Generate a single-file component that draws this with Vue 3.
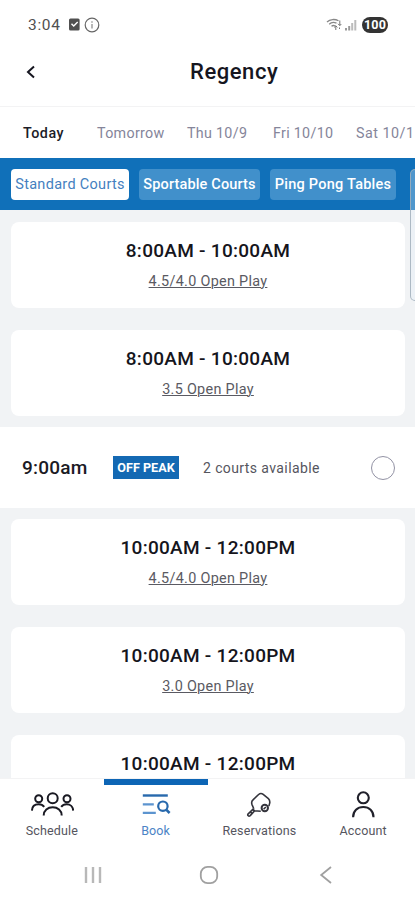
<script setup>
const days = [
  { label: 'Today', cls: 'today' },
  { label: 'Tomorrow', cls: 'tomorrow' },
  { label: 'Thu 10/9', cls: 'thu' },
  { label: 'Fri 10/10', cls: 'fri' },
  { label: 'Sat 10/1', cls: 'sat' },
]
const courts = ['Standard Courts', 'Sportable Courts', 'Ping Pong Tables']
const morning = [
  { time: '8:00AM - 10:00AM', title: '4.5/4.0 Open Play' },
  { time: '8:00AM - 10:00AM', title: '3.5 Open Play' },
]
const midday = [
  { time: '10:00AM - 12:00PM', title: '4.5/4.0 Open Play' },
  { time: '10:00AM - 12:00PM', title: '3.0 Open Play' },
  { time: '10:00AM - 12:00PM', title: '' },
]
</script>

<template>
  <div class="screen">
    <div class="status">
      <span class="clock">3:04</span>
      <svg class="check" width="11" height="13" viewBox="0 0 11 13">
        <rect x="0" y="0.5" width="10.6" height="12" rx="1.5" fill="#505050" />
        <path d="M2.5 5.8l2.2 2.3 4-4.2" fill="none" stroke="#fff" stroke-width="1.4" />
      </svg>
      <svg class="info" width="16" height="16" viewBox="0 0 16 16" fill="none" stroke="#666">
        <circle cx="8" cy="8" r="6.8" stroke-width="1.2" />
        <path d="M8 4.3v1.4M8 7v4.6" stroke-width="1.4" stroke="#999" />
      </svg>
      <svg class="wifi" width="16" height="13" viewBox="0 0 16 13" fill="none" stroke="#888" stroke-width="1.3">
        <path d="M1 4C4 1 9 .8 12.5 2.8M3.2 6.2C5.5 4 8 4 10.5 5.2M5.5 8.3c1.5-1.2 2.5-1 3.5-.3" />
        <path d="M13.8 2.5v5M12 5.8l1.8 1.8 1.5-1.6M9.8 12V7.8M8.2 9.4l1.6-1.6 1.6 1.6M13.5 9.5v1.5" stroke="#777" stroke-width="1" />
      </svg>
      <svg class="signal" width="12" height="12" viewBox="0 0 12 12">
        <path d="M0 9h2v2.6H0zM3.2 7h2v4.6h-2z" fill="#999" />
        <path d="M6.2 4h2v7.6h-2zM9.3 1h2v10.6h-2z" fill="#bbb" />
      </svg>
      <span class="battery">100</span>
    </div>

    <header class="header">
      <svg class="back" width="10" height="14" viewBox="0 0 10 14">
        <path d="M8 1.6L2 7l6 5.4" fill="none" stroke="#15151f" stroke-width="2" />
      </svg>
      <h1>Regency</h1>
    </header>

    <nav class="days">
      <span v-for="d in days" :key="d.label" class="day" :class="d.cls">{{ d.label }}</span>
    </nav>

    <div class="courts">
      <span v-for="(c, i) in courts" :key="c" class="court" :class="'court-' + i">{{ c }}</span>
    </div>

    <main class="list">
      <article v-for="(s, i) in morning" :key="'m' + i" class="card">
        <div class="time">{{ s.time }}</div>
        <div class="play">{{ s.title }}</div>
      </article>
      <section class="slot">
        <span class="slot-time">9:00am</span>
        <span class="badge">OFF PEAK</span>
        <span class="available">2 courts available</span>
        <span class="radio"></span>
      </section>
      <article v-for="(s, i) in midday" :key="'d' + i" class="card">
        <div class="time">{{ s.time }}</div>
        <div v-if="s.title" class="play">{{ s.title }}</div>
      </article>
    </main>

    <footer class="tabs">
      <div class="tab">
        <svg width="44" height="28" viewBox="0 0 44 28" fill="none" stroke="#191922" stroke-width="2">
          <circle cx="22.7" cy="7.3" r="5" />
          <path d="M13.7 24.4c0-5 4-8.2 9-8.2s9 3.2 9 8.2" />
          <circle cx="8.7" cy="7.8" r="3.5" />
          <circle cx="37" cy="7.8" r="3.5" />
          <path d="M1.9 19.6c.2-4 3-6.3 6.8-6.3 2.4 0 4.3.9 5.5 2.5M43.2 19.6c-.2-4-3-6.3-6.5-6.3-2.4 0-4.3.9-5.5 2.5" />
        </svg>
        <span class="lbl">Schedule</span>
      </div>
      <div class="tab active">
        <svg width="30" height="28" viewBox="0 0 30 28" fill="none" stroke="#2869ad">
          <path d="M1.8 4.5h25" stroke-width="2.4" />
          <path d="M1.8 13.3h11M1.8 21.8h13" stroke="#5c94cf" stroke-width="2.3" />
          <circle cx="21.9" cy="15.2" r="4.7" stroke-width="2.2" />
          <path d="M25.2 18.6l3.4 3.4" stroke-width="2.6" />
        </svg>
        <span class="lbl book">Book</span>
      </div>
      <div class="tab">
        <svg width="28" height="28" viewBox="0 0 28 28" fill="none" stroke="#34343c" stroke-width="1.6" stroke-linejoin="round">
          <path d="M8.6 17.2L7 13.6c-.7-2-.2-3.6 1-4.7l5.6-5.4c1.6-1.4 3-1.4 4.6-.1l5.2 4.3c1.3 1.2 1.6 2.7 1.3 4.4l-.8 3" />
          <path d="M8.6 17.2v2.5l7.2.6M8.6 17.6l-5.4 5.2c-1.2 1.6.5 3 2 1.8l4.5-4.9M5.2 21l2.4 1.5" />
          <circle cx="19.8" cy="17" r="3.2" stroke-width="2" />
          <path d="M18.6 18.2l2.2-2.2" />
        </svg>
        <span class="lbl">Reservations</span>
      </div>
      <div class="tab">
        <svg width="28" height="28" viewBox="0 0 28 28" fill="none" stroke="#20202a" stroke-width="2.1">
          <circle cx="14.3" cy="6.8" r="5.5" />
          <path d="M4.1 26.2c0-6.3 4.3-10.2 10.2-10.2s10.2 3.9 10.2 10.2" />
        </svg>
        <span class="lbl">Account</span>
      </div>
    </footer>

    <div class="system">
      <svg width="18" height="18" viewBox="0 0 18 18"><path d="M2 1v16M9 1v16M16 1v16" stroke="#b8b8b8" stroke-width="2.4" /></svg>
      <svg class="home" width="20" height="20" viewBox="0 0 20 20"><rect x="1.8" y="1.8" width="16.4" height="16.4" rx="6.8" fill="none" stroke="#a0a0a0" stroke-width="1.8" /></svg>
      <svg width="14" height="20" viewBox="0 0 14 20"><path d="M12 2L2.2 10 12 18" fill="none" stroke="#a0a0a0" stroke-width="1.8" /></svg>
    </div>

    <div class="edge-panel"></div>
  </div>
</template>

<style>
body { margin: 0; }
</style>

<style scoped>
.screen {
  position: relative;
  width: 415px;
  height: 900px;
  overflow: hidden;
  display: flex;
  flex-direction: column;
  background: #fff;
  font-family: Roboto, "Liberation Sans", sans-serif;
  color: #1c1c26;
  white-space: nowrap;
}
.status { height: 38px; flex: none; display: flex; align-items: center; padding: 11px 27px 0 28px; box-sizing: border-box; }
.clock { font-size: 15.5px; letter-spacing: 0.7px; color: #505050; width: 41px; }
.info { margin-left: 4px; }
.wifi { margin-left: auto; }
.signal { margin: 0 5px 0 3px; }
.battery {
  width: 26px; height: 16px; border-radius: 8px; background: #333; color: #fff;
  font-size: 12.5px; line-height: 16px; font-weight: 700; text-align: center; letter-spacing: 0.2px;
}
.header { height: 69px; flex: none; display: flex; align-items: center; padding-left: 26px; box-sizing: border-box; border-bottom: 1px solid #f3f3f4; }
.header h1 { margin: 0 0 0 154px; font-size: 22px; font-weight: 500; letter-spacing: 0.55px; line-height: 26px; color: #16161f; }
.days { height: 51px; flex: none; display: flex; align-items: center; padding-left: 23px; color: #85859a; font-size: 14.3px; }
.day { flex: none; letter-spacing: 0.3px; }
.today { width: 74px; font-weight: 500; letter-spacing: 0.5px; color: #1c1c28; }
.tomorrow { width: 90px; }
.thu { width: 86px; }
.fri { width: 83px; }
.sat { letter-spacing: 0.5px; }
.courts { height: 52px; flex: none; box-sizing: border-box; display: flex; align-items: center; gap: 10px; padding-left: 11px; background: #1070b9; }
.court { flex: none; height: 31px; line-height: 32px; border-radius: 4px; background: #4190cb; color: #fff; font-size: 14.5px; font-weight: 500; letter-spacing: 0.15px; text-align: center; }
.court-0 { width: 118px; background: #fff; color: #447fc0; font-weight: 400; letter-spacing: 0.3px; }
.court-1 { width: 121px; }
.court-2 { width: 126px; letter-spacing: 0.25px; }
.list { flex: 1; min-height: 0; overflow: hidden; background: #f1f3f5; display: flex; flex-direction: column; padding-top: 12px; }
.card { flex: none; height: 86px; margin: 0 10px 22px 11px; box-sizing: border-box; padding-top: 17px; border-radius: 8px; background: #fff; text-align: center; }
.time { font-size: 19px; line-height: 24px; font-weight: 500; color: #15151c; letter-spacing: 0.28px; }
.play { margin-top: 9px; font-size: 14.4px; line-height: 20px; letter-spacing: 0.3px; color: #5a5a62; text-decoration: underline; text-decoration-thickness: 1px; text-underline-offset: 1px; }
.slot { flex: none; height: 81px; margin: -11px 0 11px; display: flex; align-items: center; background: #fff; padding: 0 20px 0 22px; }
.slot-time { width: 91px; font-size: 19px; letter-spacing: 0.2px; font-weight: 500; color: #1b1b24; }
.badge { width: 66px; height: 23px; line-height: 23px; background: #1469b3; color: #fff; font-size: 12.6px; font-weight: 700; text-align: center; }
.available { margin-left: 24px; font-size: 14px; letter-spacing: 0.4px; color: #55555e; }
.radio { margin-left: auto; width: 24px; height: 24px; box-sizing: border-box; border: 1.5px solid #9292a4; border-radius: 50%; }
.tabs { height: 72px; flex: none; display: flex; border-top: 1px solid #f3f3f4; box-sizing: border-box; background: #fff; }
.tab { flex: 1; box-sizing: border-box; display: flex; flex-direction: column; align-items: center; padding-top: 12px; }
.tab.active { border-top: 6px solid #0d65b5; padding-top: 6px; }
.lbl { margin-top: 3px; line-height: 17px; font-size: 12.5px; letter-spacing: 0.15px; color: #55555e; }
.book { color: #4b84c6; }
.system { height: 50px; flex: none; display: flex; align-items: center; justify-content: space-between; padding: 0 82px 0 84px; }
.home { margin-right: 3px; }
.edge-panel { position: absolute; left: 410px; top: 169px; width: 12px; height: 132px; box-sizing: border-box; border: 1px solid rgba(160, 175, 187, 0.85); border-radius: 5px; background: rgba(225, 238, 247, 0.3); }
</style>
